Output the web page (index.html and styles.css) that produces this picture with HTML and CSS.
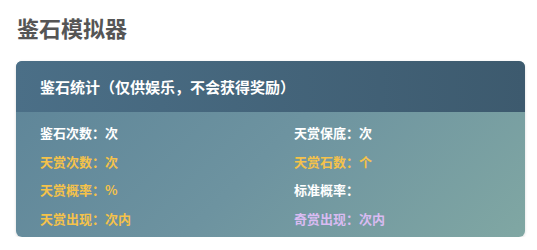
FILE: index.html
```html
<!DOCTYPE html>
<html lang="zh">
<head>
<meta charset="utf-8">
<title>鉴石模拟器</title>
<link rel="stylesheet" href="styles.css">
</head>
<body>
<div class="page">
  <h1 class="title">鉴石模拟器</h1>
  <section class="card">
    <header class="card-head">鉴石统计（仅供娱乐，不会获得奖励）</header>
    <div class="stats">
      <div class="stat white">鉴石次数：次</div>
      <div class="stat white">天赏保底：次</div>
      <div class="stat gold">天赏次数：次</div>
      <div class="stat gold">天赏石数：个</div>
      <div class="stat gold">天赏概率：%</div>
      <div class="stat white">标准概率：</div>
      <div class="stat gold">天赏出现：次内</div>
      <div class="stat purple">奇赏出现：次内</div>
    </div>
  </section>
</div>
</body>
</html>
```
FILE: styles.css
```css
html, body {
  margin: 0;
  padding: 0;
  background: #ffffff;
  font-family: "Noto Sans CJK SC", "Noto Sans", sans-serif;
}
.page {
  padding: 13px 12px 0 16px;
}
.title {
  margin: 0 0 20px 0;
  font-size: 22px;
  line-height: 28px;
  font-weight: 700;
  color: #555555;
  padding-left: 1px;
}
.card {
  border-radius: 6px;
  overflow: hidden;
  box-shadow: 0 1px 3px rgba(0,0,0,0.15);
  background: linear-gradient(135deg, #5d8498 0%, #6d93a0 50%, #80a7a3 100%);
}
.card-head {
  height: 51px;
  box-sizing: border-box;
  padding: 0 24px;
  display: flex;
  align-items: center;
  font-size: 15px;
  font-weight: 700;
  color: #ffffff;
  background: linear-gradient(90deg, #4b6f87 0%, #3d5a6e 100%);
}
.stats {
  display: grid;
  grid-template-columns: 254px 1fr;
  row-gap: 10.5px;
  padding: 12px 24px 9.5px 24px;
}
.stat {
  font-size: 13px;
  line-height: 18px;
  font-weight: 700;
}
.white { color: #ffffff; }
.gold { color: #f5c24a; }
.purple { color: #d9bbf2; }
```
